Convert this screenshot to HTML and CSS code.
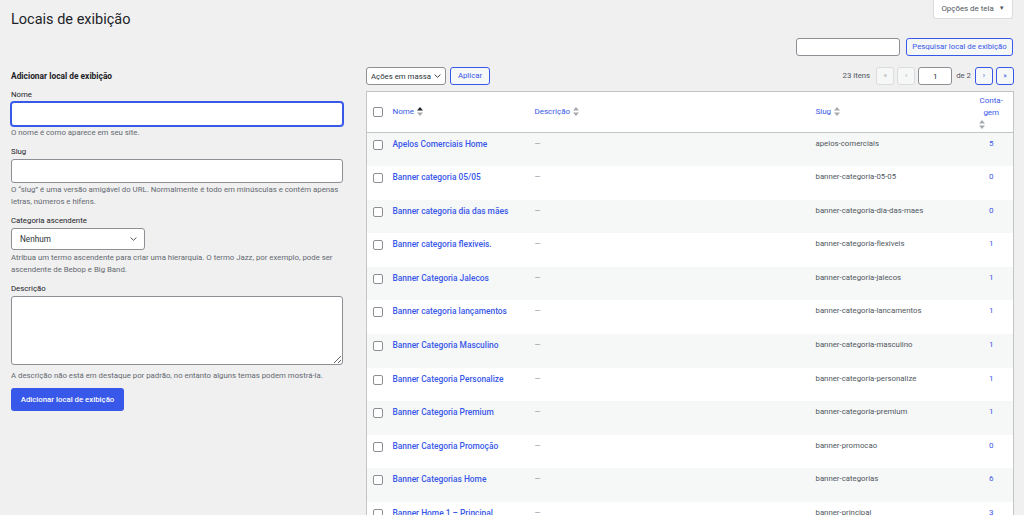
FILE: index.html
```html
<!DOCTYPE html>
<html lang="pt-BR">
<head>
    <meta charset="UTF-8">
    <meta name="viewport" content="width=device-width, initial-scale=1.0">
    <title>Locais de exibição</title>
    <link rel="stylesheet" href="styles.css">
</head>
<body>
    <div class="wrap">
        <div class="page-top">
            <h1>Locais de exibição</h1>
            <button class="screen-opts">Opções de tela <span class="caret">▼</span></button>
        </div>

        <form class="search-box">
            <input type="search" class="search-input">
            <button type="button" class="btn-secondary search-btn">Pesquisar local de exibição</button>
        </form>

        <div class="cols">
            <div class="col-left">
                <h2>Adicionar local de exibição</h2>
                <div class="form-field first">
                    <label for="tag-name">Nome</label>
                    <input type="text" id="tag-name" class="field focused">
                    <p class="help">O nome é como aparece em seu site.</p>
                </div>
                <div class="form-field">
                    <label for="tag-slug">Slug</label>
                    <input type="text" id="tag-slug" class="field">
                    <p class="help">O “slug” é uma versão amigável do URL. Normalmente é todo em minúsculas e contém apenas letras, números e hifens.</p>
                </div>
                <div class="form-field">
                    <label for="parent">Categoria ascendente</label>
                    <div class="select-wrap parent-select">
                        <select id="parent" class="select">
                            <option>Nenhum</option>
                        </select>
                        <svg class="chevron" width="7" height="4" viewBox="0 0 7 4"><path d="M0.6 0.6l2.9 2.7 2.9-2.7" fill="none" stroke="#50575e" stroke-width="1"/></svg>
                    </div>
                    <p class="help">Atribua um termo ascendente para criar uma hierarquia. O termo Jazz, por exemplo, pode ser ascendente de Bebop e Big Band.</p>
                </div>
                <div class="form-field">
                    <label for="tag-description">Descrição</label>
                    <textarea id="tag-description" class="textarea"></textarea>
                    <p class="help after-textarea">A descrição não está em destaque por padrão, no entanto alguns temas podem mostrá-la.</p>
                </div>
                <button type="button" class="btn-primary">Adicionar local de exibição</button>
            </div>

            <div class="col-right">
                <div class="tablenav">
                    <div class="bulk">
                        <div class="select-wrap bulk-select">
                            <select class="select small">
                                <option>Ações em massa</option>
                            </select>
                            <svg class="chevron" width="7" height="4" viewBox="0 0 7 4"><path d="M0.6 0.6l2.9 2.7 2.9-2.7" fill="none" stroke="#3c434a" stroke-width="1"/></svg>
                        </div>
                        <button type="button" class="btn-secondary apply-btn">Aplicar</button>
                    </div>
                    <div class="pages">
                        <span class="count">23 itens</span>
                        <span class="page-btn disabled">«</span>
                        <span class="page-btn disabled">‹</span>
                        <input type="text" class="page-input" value="1">
                        <span class="total">de 2</span>
                        <a href="#" class="page-btn">›</a>
                        <a href="#" class="page-btn">»</a>
                    </div>
                </div>

                <table class="list-table">
                    <colgroup>
                        <col class="c-check">
                        <col class="c-name">
                        <col class="c-desc">
                        <col class="c-slug">
                        <col class="c-count">
                    </colgroup>
                    <thead>
                        <tr>
                            <th class="check"><span class="checkbox"></span></th>
                            <th><a href="#">Nome</a><svg class="sort" width="6" height="9" viewBox="0 0 6 9"><path d="M3 0l3 3.6H0z" fill="#1d2327"/><path d="M3 9L0 5.4h6z" fill="#a7aaad"/></svg></th>
                            <th><a href="#">Descrição</a><svg class="sort" width="6" height="9" viewBox="0 0 6 9"><path d="M3 0l3 3.6H0z" fill="#a7aaad"/><path d="M3 9L0 5.4h6z" fill="#a7aaad"/></svg></th>
                            <th><a href="#">Slug</a><svg class="sort" width="6" height="9" viewBox="0 0 6 9"><path d="M3 0l3 3.6H0z" fill="#a7aaad"/><path d="M3 9L0 5.4h6z" fill="#a7aaad"/></svg></th>
                            <th class="num"><a href="#">Conta-gem</a><svg class="sort block" width="6" height="9" viewBox="0 0 6 9"><path d="M3 0l3 3.6H0z" fill="#a7aaad"/><path d="M3 9L0 5.4h6z" fill="#a7aaad"/></svg></th>
                        </tr>
                    </thead>
                    <tbody id="rows"></tbody>
                </table>
            </div>
        </div>
    </div>

    <script>
        const terms = [
            ['Apelos Comerciais Home', 'apelos-comerciais', 5],
            ['Banner categoria 05/05', 'banner-categoria-05-05', 0],
            ['Banner categoria dia das mães', 'banner-categoria-dia-das-maes', 0],
            ['Banner categoria flexiveis.', 'banner-categoria-flexiveis', 1],
            ['Banner Categoria Jalecos', 'banner-categoria-jalecos', 1],
            ['Banner categoria lançamentos', 'banner-categoria-lancamentos', 1],
            ['Banner Categoria Masculino', 'banner-categoria-masculino', 1],
            ['Banner Categoria Personalize', 'banner-categoria-personalize', 1],
            ['Banner Categoria Premium', 'banner-categoria-premium', 1],
            ['Banner Categoria Promoção', 'banner-promocao', 0],
            ['Banner Categorias Home', 'banner-categorias', 6],
            ['Banner Home 1 – Principal', 'banner-principal', 3]
        ];

        document.getElementById('rows').innerHTML = terms.map(t => `
            <tr>
                <td class="check"><span class="checkbox"></span></td>
                <td class="name"><a href="#">${t[0]}</a></td>
                <td class="desc">—</td>
                <td class="slug">${t[1]}</td>
                <td class="num"><a href="#">${t[2]}</a></td>
            </tr>`).join('');
    </script>
</body>
</html>
```

FILE: styles.css
```css
html, body {
    overflow: hidden;
}

body {
    margin: 0;
    background: #f0f0f1;
    font-family: Roboto, 'Liberation Sans', sans-serif;
    font-size: 7.8px;
    line-height: 12px;
    color: #3c434a;
}

a {
    color: #3858e9;
    text-decoration: none;
}

button {
    white-space: nowrap;
}

.wrap {
    padding: 0 11px;
}

.page-top {
    display: flex;
    justify-content: space-between;
    align-items: flex-start;
    height: 30px;
}

h1 {
    margin: 10px 0 0;
    font-size: 14.5px;
    font-weight: 400;
    line-height: 20px;
    color: #1d2327;
}

.screen-opts {
    margin-top: -1px;
    width: 80px;
    height: 20px;
    padding: 0;
    background: #fff;
    border: 1px solid #dcdcde;
    border-top: none;
    border-radius: 0 0 3px 3px;
    font-family: inherit;
    font-size: 7.9px;
    color: #50575e;
    cursor: pointer;
}

.screen-opts .caret {
    font-size: 6px;
    margin-left: 3px;
    vertical-align: 1px;
}

.search-box {
    display: flex;
    justify-content: flex-end;
    gap: 6px;
    margin: 8px 0 0;
}

.search-input {
    width: 104px;
    height: 18px;
    box-sizing: border-box;
    border: 1px solid #8c8f94;
    border-radius: 3px;
    background: #fff;
}

.btn-secondary {
    height: 18px;
    box-sizing: border-box;
    padding: 0 6px;
    border: 1px solid #3858e9;
    border-radius: 3px;
    background: #f6f7f7;
    color: #3858e9;
    font-family: inherit;
    font-size: 7.8px;
    line-height: 16px;
    cursor: pointer;
}

.search-btn {
    width: 107px;
    padding: 0;
}

.cols {
    display: flex;
    gap: 23px;
    margin-top: 11px;
}

.col-left {
    width: 332px;
    flex-shrink: 0;
}

.col-right {
    flex: 1;
}

h2 {
    margin: 0;
    font-size: 8.4px;
    font-weight: 700;
    line-height: 18px;
    color: #1d2327;
}

.form-field {
    margin-top: 7px;
}

.form-field.first {
    margin-top: 4px;
}

.form-field label {
    display: block;
    margin-bottom: 1px;
    color: #1d2327;
}

.field {
    display: block;
    width: 100%;
    height: 24px;
    box-sizing: border-box;
    margin: 0;
    border: 1px solid #8c8f94;
    border-radius: 3px;
    background: #fff;
}

.field.focused {
    border-color: #3858e9;
    box-shadow: 0 0 0 1px #3858e9;
}

.help {
    margin: 1px 0 0;
    color: #646970;
}

.help.after-textarea {
    margin-top: 5px;
}

.select-wrap {
    position: relative;
}

.select {
    display: block;
    width: 100%;
    height: 22px;
    box-sizing: border-box;
    padding: 0 8px;
    border: 1px solid #8c8f94;
    border-radius: 3px;
    background: #fff;
    font-family: inherit;
    font-size: 8.2px;
    color: #2c3338;
    appearance: none;
}

.parent-select {
    width: 134px;
}

.parent-select + .help {
    margin-top: 2px;
}

.chevron {
    position: absolute;
    right: 8px;
    top: 9px;
}

.textarea {
    display: block;
    width: 100%;
    height: 69px;
    box-sizing: border-box;
    margin: 0;
    border: 1px solid #8c8f94;
    border-radius: 3px;
    background: #fff;
}

.btn-primary {
    margin-top: 6px;
    width: 113px;
    height: 23px;
    padding: 0;
    border: none;
    border-radius: 3px;
    background: #3858e9;
    color: #fff;
    font-family: inherit;
    font-size: 7.8px;
    font-weight: 500;
    cursor: pointer;
}

.tablenav {
    display: flex;
    justify-content: space-between;
    align-items: center;
    height: 18px;
    margin-bottom: 6px;
}

.bulk {
    display: flex;
    gap: 4px;
}

.bulk-select {
    width: 80px;
}

.select.small {
    height: 18px;
    padding: 0 4px;
    font-size: 7.8px;
}

.bulk-select .chevron {
    right: 5px;
    top: 7px;
}

.apply-btn {
    width: 40px;
    padding: 0;
}

.pages {
    display: flex;
    align-items: center;
    gap: 3px;
    color: #50575e;
}

.pages .count {
    margin-right: 3px;
}

.page-btn {
    display: flex;
    align-items: center;
    justify-content: center;
    width: 18px;
    height: 18px;
    box-sizing: border-box;
    border: 1px solid #3858e9;
    border-radius: 3px;
    background: #f6f7f7;
    color: #3858e9;
    font-size: 7.5px;
}

.page-btn.disabled {
    border-color: #dcdcde;
    color: #a7aaad;
}

.page-input {
    width: 34px;
    height: 18px;
    box-sizing: border-box;
    margin: 0;
    border: 1px solid #8c8f94;
    border-radius: 3px;
    text-align: center;
    font-family: inherit;
    font-size: 8px;
    color: #2c3338;
}

.total {
    margin: 0 1px;
}

.list-table {
    width: 100%;
    table-layout: fixed;
    border-collapse: collapse;
    border: 1px solid #c3c4c7;
    background: #fff;
}

.c-check { width: 19px; }
.c-name { width: 142px; }
.c-desc { width: 281px; }
.c-slug { width: 161px; }
.c-count { width: 44px; }

.list-table thead tr {
    height: 41px;
}

.list-table th {
    padding: 0 7px;
    text-align: left;
    font-weight: 400;
    font-size: 8px;
    vertical-align: middle;
    border-bottom: 1px solid #c3c4c7;
}

.list-table th a {
    vertical-align: middle;
}

.sort {
    margin-left: 3px;
    vertical-align: middle;
}

.sort.block {
    display: block;
    margin: 1px 0 0 5px;
}

.list-table th.num {
    padding: 0 4px;
    text-align: center;
}

.list-table tbody tr {
    height: 33.6px;
}

.list-table tbody tr:nth-child(odd) {
    background: #f6f7f7;
}

.list-table td {
    padding: 5px 7px 0;
    vertical-align: top;
    white-space: nowrap;
    overflow: hidden;
}

.list-table .check {
    padding-left: 6px;
    padding-right: 0;
}

.list-table td.check {
    padding-top: 7px;
}

.checkbox {
    display: block;
    width: 10px;
    height: 10px;
    box-sizing: border-box;
    border: 1px solid #8c8f94;
    border-radius: 2px;
    background: #fff;
}

.name a {
    font-size: 8.4px;
    font-weight: 500;
}

.desc {
    color: #8c8f94;
}

.slug {
    color: #50575e;
}

td.num {
    text-align: center;
    font-size: 8px;
}
```
